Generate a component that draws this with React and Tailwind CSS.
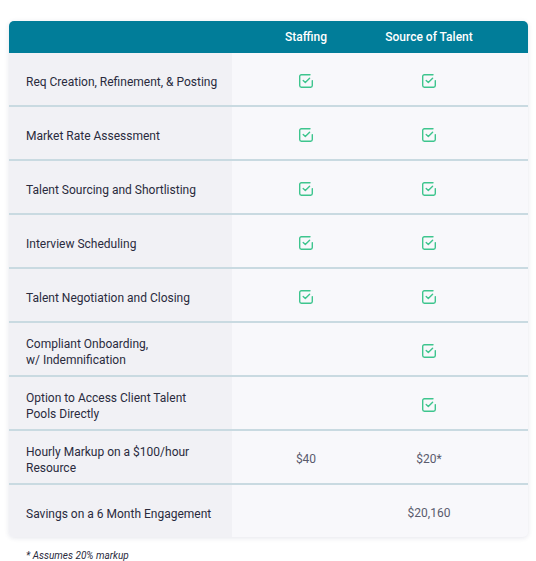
import React from "react";

const Check = () => (
  <svg width="16" height="16" viewBox="0 0 16 16" fill="none" className="block">
    <path
      d="M14.3 7.6V12.6a1.7 1.7 0 0 1-1.7 1.7H3.4a1.7 1.7 0 0 1-1.7-1.7V3.4a1.7 1.7 0 0 1 1.7-1.7h8.6"
      stroke="#3ec58e"
      strokeWidth="1.4"
      strokeLinecap="round"
      strokeLinejoin="round"
    />
    <path
      d="M5.2 7.6 7.3 9.6 11.6 5.2"
      stroke="#3ec58e"
      strokeWidth="1.4"
      strokeLinecap="round"
      strokeLinejoin="round"
    />
  </svg>
);

const rows = [
  { label: ["Req Creation, Refinement, & Posting"], a: "check", b: "check" },
  { label: ["Market Rate Assessment"], a: "check", b: "check" },
  { label: ["Talent Sourcing and Shortlisting"], a: "check", b: "check" },
  { label: ["Interview Scheduling"], a: "check", b: "check" },
  { label: ["Talent Negotiation and Closing"], a: "check", b: "check" },
  { label: ["Compliant Onboarding,", "w/ Indemnification"], a: null, b: "check" },
  { label: ["Option to Access Client Talent", "Pools Directly"], a: null, b: "check" },
  { label: ["Hourly Markup on a $100/hour", "Resource"], a: "$40", b: "$20*" },
  { label: ["Savings on a 6 Month Engagement"], a: null, b: "$20,160" },
];

const Cell = ({ v }) => {
  if (v === "check") return <Check />;
  if (v) return <span className="text-[12px] text-[#5a5b6d]">{v}</span>;
  return null;
};

export default function App() {
  return (
    <div
      className="w-[536px] h-[561px] bg-white pt-[21px] px-[9px]"
      style={{ fontFamily: "Roboto, 'Liberation Sans', sans-serif" }}
    >
      <div className="w-[519px] rounded-[5px] overflow-hidden shadow-[0_1px_5px_rgba(30,40,90,0.12)] bg-[#f8f8fb]">
        <div className="grid grid-cols-[223px_148px_98px_1fr] h-[32px] bg-[#017d99] text-white text-[12px] font-medium items-center">
          <div />
          <div className="text-center">Staffing</div>
          <div className="text-center whitespace-nowrap">Source of Talent</div>
          <div />
        </div>
        {rows.map((r, i) => (
          <div
            key={i}
            className={`grid grid-cols-[223px_148px_98px_1fr] ${
              i < rows.length - 1 ? "h-[54px] border-b-2 border-[#c9dae1]" : "h-[52px]"
            }`}
          >
            <div className="bg-[#f1f1f5] pl-[17px] pt-[5px] flex flex-col justify-center text-[12px] leading-[16px] text-[#2a2b3d] whitespace-nowrap">
              {r.label.map((l, j) => (
                <span key={j}>{l}</span>
              ))}
            </div>
            <div className="flex items-center justify-center pt-[4px]">
              <Cell v={r.a} />
            </div>
            <div className="flex items-center justify-center pt-[4px]">
              <Cell v={r.b} />
            </div>
            <div />
          </div>
        ))}
      </div>
      <div className="mt-[11px] pl-[17px] text-[10px] italic text-[#2a2b3d]">* Assumes 20% markup</div>
    </div>
  );
}
